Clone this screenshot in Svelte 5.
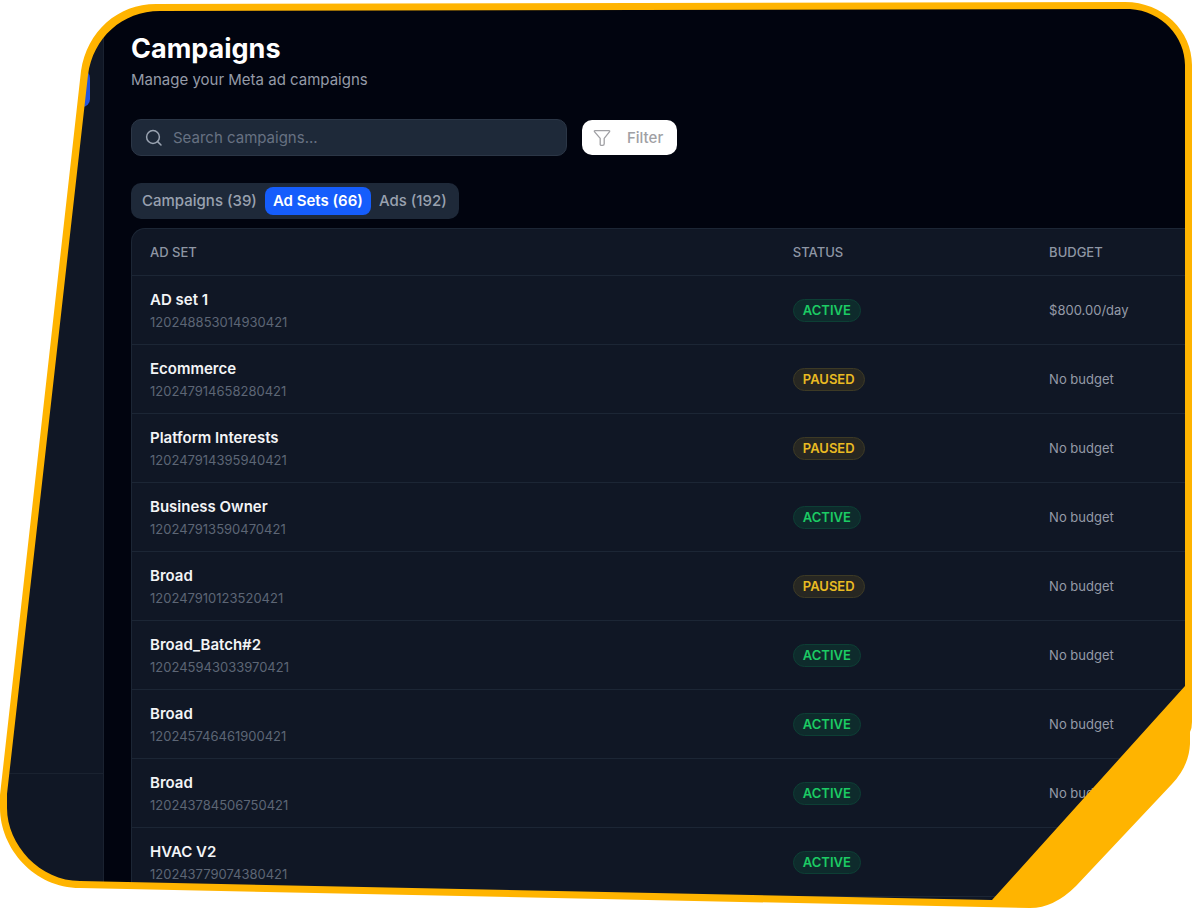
<script>
	const tabs = [
		{ id: 'campaigns', label: 'Campaigns', count: 39 },
		{ id: 'adsets', label: 'Ad Sets', count: 66 },
		{ id: 'ads', label: 'Ads', count: 192 }
	];

	const adSets = [
		{ name: 'AD set 1', id: '120248853014930421', status: 'ACTIVE', budget: '$800.00/day' },
		{ name: 'Ecommerce', id: '120247914658280421', status: 'PAUSED', budget: 'No budget' },
		{ name: 'Platform Interests', id: '120247914395940421', status: 'PAUSED', budget: 'No budget' },
		{ name: 'Business Owner', id: '120247913590470421', status: 'ACTIVE', budget: 'No budget' },
		{ name: 'Broad', id: '120247910123520421', status: 'PAUSED', budget: 'No budget' },
		{ name: 'Broad_Batch#2', id: '120245943033970421', status: 'ACTIVE', budget: 'No budget' },
		{ name: 'Broad', id: '120245746461900421', status: 'ACTIVE', budget: 'No budget' },
		{ name: 'Broad', id: '120243784506750421', status: 'ACTIVE', budget: 'No budget' },
		{ name: 'HVAC V2', id: '120243779074380421', status: 'ACTIVE', budget: '' }
	];

	let activeTab = 'adsets';
	let search = '';
</script>

<div class="showcase">
	<aside class="sidebar">
		<nav>
			<a class="nav-item" href="#campaigns" aria-label="Campaigns"></a>
		</nav>
		<div class="sidebar-footer"></div>
	</aside>

	<main class="content">
		<header>
			<h1>Campaigns</h1>
			<p class="subtitle">Manage your Meta ad campaigns</p>
		</header>

		<div class="toolbar">
			<label class="search">
				<svg width="18" height="18" viewBox="0 0 18 18" fill="none" aria-hidden="true">
					<circle cx="8" cy="8" r="6.4" stroke="currentColor" stroke-width="1.5" />
					<path d="M12.6 12.6L16 16" stroke="currentColor" stroke-width="1.5" stroke-linecap="round" />
				</svg>
				<input type="text" placeholder="Search campaigns..." aria-label="Search campaigns..." bind:value={search} />
			</label>
			<button class="filter">
				<svg width="18" height="18" viewBox="0 0 18 18" fill="none" aria-hidden="true">
					<path
						d="M2 1.6H16Q16.9 1.6 16.6 2.6L11.2 9.4V14.8Q11.2 16.4 9.6 16.4H8.2Q7.4 16.4 7.2 15.6V9.4L1.4 2.6Q1.1 1.6 2 1.6Z"
						stroke="currentColor"
						stroke-width="1.3"
						stroke-linejoin="round"
					/>
				</svg>
				<span>Filter</span>
			</button>
		</div>

		<div class="tabs">
			{#each tabs as tab}
				<button class="tab" class:selected={activeTab === tab.id} on:click={() => (activeTab = tab.id)}>
					{tab.label} ({tab.count})
				</button>
			{/each}
		</div>

		<div class="card">
			<table>
				<thead>
					<tr>
						<th class="col-name">AD SET</th>
						<th class="col-status">STATUS</th>
						<th>BUDGET</th>
					</tr>
				</thead>
				<tbody>
					{#each adSets as adSet}
						<tr>
							<td class="ad-set">
								<div class="name">{adSet.name}</div>
								<div class="id">{adSet.id}</div>
							</td>
							<td>
								<span class="badge" class:paused={adSet.status === 'PAUSED'}>{adSet.status}</span>
							</td>
							<td class="budget">{adSet.budget}</td>
						</tr>
					{/each}
				</tbody>
			</table>
		</div>
	</main>

	<!-- page-coloured mask with the yellow rim on top -->
	<svg class="frame" viewBox="0 0 1200 908" preserveAspectRatio="none" aria-hidden="true">
		<path
			fill="#ffffff"
			fill-rule="evenodd"
			d="M0 0H1200V908H0Z M156 7L1125 5C1162 5 1189 34 1189 65V720L1035 904L80 885C32 884 4 845 4 808L5 785L85 71C91 34 118 8 156 7Z"
		/>
		<path
			fill="#ffb400"
			fill-rule="evenodd"
			d="M156 4L1125 2C1163 2 1192 31 1192 65V722Q1192 728 1190 732V744Q1189 766 1172 784L1076 886Q1054 908 1030 908L80 888C34 888 0 848 0 808V795L81 71C87 31 118 4 156 4Z
			M160 11L1130 9C1162 11 1185 37 1185 65V686L992 900L80 881C40 881 7 845 7 808V794L88 75C93 38 122 11 160 11Z"
		/>
	</svg>
</div>

<style>
	:global(body) {
		margin: 0;
		background: #ffffff;
	}

	.showcase {
		position: relative;
		display: flex;
		min-height: 100vh;
		overflow: hidden;
		background: #01040f;
		color: #ffffff;
		font-family: Inter, 'Liberation Sans', sans-serif;
	}

	.frame {
		position: absolute;
		inset: 0;
		width: 100%;
		height: 100%;
		pointer-events: none;
	}

	.sidebar {
		display: flex;
		flex-direction: column;
		justify-content: space-between;
		flex: 0 0 104px;
		box-sizing: border-box;
		padding-top: 70px;
		background: #101725;
		border-right: 1px solid #1a2230;
	}

	.nav-item {
		display: block;
		height: 37px;
		margin-right: 13px;
		border-radius: 8px;
		background: #2455dc;
	}

	.sidebar-footer {
		height: 134px;
		border-top: 1px solid #1a2230;
	}

	.content {
		display: flex;
		flex-direction: column;
		flex: 1;
		min-width: 0;
		padding: 32px 0 0 27px;
	}

	h1 {
		margin: 0;
		font-size: 27px;
		font-weight: 700;
		line-height: 34px;
	}

	.subtitle {
		margin: 2px 0 0;
		font-size: 15px;
		line-height: 24px;
		color: #959ba8;
	}

	.toolbar {
		display: flex;
		align-items: center;
		gap: 15px;
		margin-top: 27px;
	}

	.search {
		display: flex;
		align-items: center;
		gap: 10px;
		box-sizing: border-box;
		width: 436px;
		height: 37px;
		padding: 0 13px;
		border: 1px solid #2b3646;
		border-radius: 10px;
		background: #1e2939;
		color: #9aa3b1;
	}

	.search input {
		flex: 1;
		min-width: 0;
		padding: 0;
		border: 0;
		outline: none;
		background: transparent;
		color: #ffffff;
		font: inherit;
		font-size: 15px;
	}

	.search input::placeholder {
		color: #677182;
		opacity: 1;
	}

	.filter {
		display: flex;
		align-items: center;
		gap: 16px;
		height: 35px;
		padding: 0 14px 0 11px;
		border: 0;
		border-radius: 10px;
		background: #ffffff;
		color: #a0a0a4;
		font: inherit;
		font-size: 15px;
		font-weight: 500;
		line-height: 20px;
	}

	.tabs {
		display: flex;
		align-items: center;
		align-self: flex-start;
		box-sizing: border-box;
		height: 36px;
		margin-top: 27px;
		padding: 0 4px 0 3px;
		border-radius: 10px;
		background: #1e2939;
	}

	.tab {
		height: 28px;
		padding: 0 8px;
		border: 0;
		border-radius: 8px;
		background: transparent;
		color: #99a1af;
		font: inherit;
		font-size: 15px;
		font-weight: 500;
		line-height: 20px;
	}

	.tab.selected {
		background: #155dfc;
		color: #ffffff;
		font-weight: 600;
	}

	.card {
		flex: 1;
		margin-top: 9px;
		border: 1px solid #1c2635;
		border-right: 0;
		border-bottom: 0;
		border-radius: 14px 0 0 0;
		background: #101725;
	}

	table {
		width: 100%;
		table-layout: fixed;
		border-spacing: 0;
	}

	th,
	td {
		box-sizing: border-box;
		padding: 0 0 0 18px;
		border-bottom: 1px solid #1c2635;
	}

	th + th,
	td + td {
		padding-left: 20px;
	}

	th {
		height: 47px;
		font-size: 13px;
		font-weight: 500;
		text-align: left;
		color: #8e96a4;
	}

	.col-name {
		width: 60%;
	}

	.col-status {
		width: 24%;
	}

	td {
		height: 69px;
	}

	.ad-set {
		padding-top: 2px;
	}

	.name {
		font-size: 15px;
		font-weight: 600;
		line-height: 22px;
		color: #f3f4f6;
	}

	.id {
		font-size: 13px;
		line-height: 22px;
		color: #5d6675;
	}

	.badge {
		display: inline-block;
		padding: 0 9px;
		border: 1px solid #0d3f35;
		border-radius: 12px;
		background: #0e2b2c;
		color: #1ccb64;
		font-size: 13px;
		font-weight: 600;
		line-height: 21px;
	}

	.badge.paused {
		border-color: #3d3a25;
		background: #272722;
		color: #eabb22;
	}

	td.budget {
		font-size: 13px;
		color: #959ba8;
	}
</style>
